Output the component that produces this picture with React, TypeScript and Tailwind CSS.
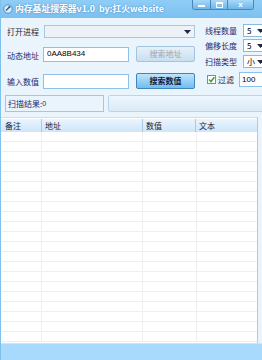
import React from "react";

const F = { fontFamily: '"Noto Sans CJK SC", "Liberation Sans", sans-serif' } as React.CSSProperties;

function Arrow() {
  return (
    <svg width="7" height="4" viewBox="0 0 7 4" className="shrink-0">
      <path d="M0 0 H7 L3.5 4 Z" fill="#1e2a44" />
    </svg>
  );
}

function Select({ value }: { value: string }) {
  return (
    <div className="w-[28px] shrink-0 h-[13px] bg-white border border-[#8eb9dc] flex items-center pl-[3px] pr-[6px]">
      <span className="text-[8px] leading-none text-black flex-1">{value}</span>
      <Arrow />
    </div>
  );
}

export default function App() {
  const rows = Array.from({ length: 21 });
  return (
    <div className="w-[262px] h-[360px] overflow-hidden flex flex-col bg-[#eaf4fc] border-l border-[#7fc0ec]" style={F}>
      {/* title bar */}
      <div className="h-[18px] flex items-start bg-gradient-to-b from-[#8fcdf6] to-[#7cc0f0] shrink-0">
        <div className="h-[18px] flex items-center pl-[2px]">
          <svg width="10" height="10" viewBox="0 0 10 10" className="mr-[2px]">
            <circle cx="5" cy="5" r="4.2" fill="#d9eefc" stroke="#3d7fb6" strokeWidth="0.8" />
            <path d="M3 6.5 L6.5 3" stroke="#2b5f9a" strokeWidth="1.4" />
            <circle cx="6.5" cy="3" r="1.1" fill="#2b5f9a" />
          </svg>
          <span className="text-[8.8px] font-bold text-white leading-none whitespace-pre [text-shadow:0_0_2px_#3a86c4]">
            内存基址搜索器v1.0  by:扛火website
          </span>
        </div>
        <div className="ml-auto mr-[8px] flex h-[10px] border border-[#4a87b8] border-t-0 rounded-b-[3px] overflow-hidden">
          <div className="w-[18px] h-full bg-gradient-to-b from-[#a8d8f7] to-[#6db7ea] flex items-center justify-center border-r border-[#4a87b8]">
            <div className="w-[7px] h-[2px] bg-white mt-[3px]" />
          </div>
          <div className="w-[17px] h-full bg-gradient-to-b from-[#a8d8f7] to-[#6db7ea] flex items-center justify-center border-r border-[#4a87b8]">
            <div className="w-[7px] h-[6px] border border-white border-t-2" />
          </div>
          <div className="w-[25px] h-full bg-gradient-to-b from-[#a8d8f7] to-[#6db7ea] flex items-center justify-center">
            <span className="text-[8px] font-bold text-white leading-none" style={{ fontFamily: '"Liberation Sans", sans-serif' }}>x</span>
          </div>
        </div>
      </div>

      {/* form */}
      <div className="flex shrink-0">
        <div className="w-[202px] shrink-0 flex flex-col">
          <div className="flex items-center mt-[7px] h-[13px]">
            <span className="w-[43px] pl-[6px] text-[8px] leading-none text-[#1b1f3a]">打开进程</span>
            <div className="w-[151px] h-[13px] bg-[#eef2f6] border border-[#a9c6df] flex items-center justify-end pr-[3px]">
              <Arrow />
            </div>
          </div>
          <div className="flex items-center mt-[8px] h-[16px]">
            <span className="w-[42px] pl-[6px] text-[8px] leading-none text-[#1f2a6a] pt-[4px]">动态地址</span>
            <div className="w-[86px] h-[15px] bg-white border border-[#8fc0e8] flex items-center pl-[3px]">
              <span className="text-[8px] leading-none text-black" style={{ fontFamily: '"Liberation Sans", sans-serif' }}>0AA8B434</span>
            </div>
            <div className="ml-[7px] w-[59px] h-[16px] rounded-[2px] border border-[#a6c3dc] bg-gradient-to-b from-[#e6f1fa] to-[#c9dff1] flex items-center justify-center">
              <span className="text-[8px] leading-none text-[#9aa6b2]">搜索地址</span>
            </div>
          </div>
          <div className="flex items-center mt-[11px] h-[16px]">
            <span className="w-[42px] pl-[6px] text-[8px] leading-none text-[#1f2a6a] pt-[2px]">输入数值</span>
            <div className="w-[86px] h-[15px] bg-white border border-[#8fc0e8]" />
            <div className="ml-[7px] w-[59px] h-[16px] rounded-[2px] border border-[#3f86bf] bg-gradient-to-b from-[#bfe3fb] to-[#6fbdf0] flex items-center justify-center">
              <span className="text-[8px] leading-none font-bold text-[#0f1b3d]">搜索数值</span>
            </div>
          </div>
        </div>
        <div className="flex-1 flex flex-col pl-[2px]">
          <div className="flex items-center mt-[6px] h-[13px]">
            <span className="w-[38px] shrink-0 text-[8px] leading-none text-[#1f2a6a]">线程数量</span>
            <Select value="5" />
          </div>
          <div className="flex items-center mt-[2px] h-[13px]">
            <span className="w-[38px] shrink-0 text-[8px] leading-none text-[#1f2a6a]">偏移长度</span>
            <Select value="5" />
          </div>
          <div className="flex items-center mt-[3px] h-[13px]">
            <span className="w-[38px] shrink-0 text-[8px] leading-none text-[#1f2a6a]">扫描类型</span>
            <Select value="小" />
          </div>
          <div className="flex items-center mt-[4px] h-[15px]">
            <div className="ml-[2px] w-[9px] h-[9px] shrink-0 bg-white border border-[#6f8fae] flex items-center justify-center">
              <svg width="7" height="7" viewBox="0 0 7 7">
                <path d="M1 3.5 L3 5.5 L6.3 1.2" stroke="#2fa52f" strokeWidth="1.5" fill="none" />
              </svg>
            </div>
            <span className="ml-[2px] w-[21px] shrink-0 text-[8px] leading-none text-[#1b1f3a]">过滤</span>
            <div className="w-[40px] shrink-0 h-[15px] bg-white border border-[#8fc0e8] flex items-center pl-[2px]">
              <span className="text-[8px] leading-none text-black" style={{ fontFamily: '"Liberation Sans", sans-serif' }}>100</span>
            </div>
          </div>
        </div>
      </div>

      {/* result row */}
      <div className="flex mt-[6px] h-[17px] shrink-0">
        <div className="ml-[4px] w-[99px] h-[17px] border border-[#9cc8ea] bg-[#eaf4fc] flex items-center pl-[2px]">
          <span className="text-[8px] leading-none text-[#1f2a6a]">扫描结果:</span>
          <span className="text-[7px] leading-none text-[#1f2a6a]" style={{ fontFamily: '"Liberation Sans", sans-serif' }}>0</span>
        </div>
        <div className="ml-[4px] flex-1 h-[17px] border border-[#b8d7ee] rounded-[2px] bg-gradient-to-b from-[#eef6fc] to-[#dbeaf7] -mr-[6px]" />
      </div>

      {/* table */}
      <div className="mt-[5px] w-[257px] h-[226px] bg-white border-t border-r border-[#c4e1f6] border-r-[#9fd0f4] flex flex-col shrink-0 overflow-hidden">
        <div className="h-[13px] mt-[1px] flex bg-gradient-to-b from-[#eaf5fe] to-[#cde6fa] shrink-0 text-[8px] leading-none text-[#1b1f3a] items-center">
          <div className="w-[41px] pl-[4px] h-full flex items-center border-r border-[#a9c9e4]">备注</div>
          <div className="w-[101px] pl-[3px] h-full flex items-center border-r border-[#a9c9e4]">地址</div>
          <div className="w-[53px] pl-[3px] h-full flex items-center border-r border-[#a9c9e4]">数值</div>
          <div className="flex-1 pl-[3px] h-full flex items-center">文本</div>
        </div>
        <div className="flex flex-col ml-[1px]">
          {rows.map((_, i) => (
            <div key={i} className="h-[10px] flex border-b border-[#efefef] shrink-0">
              <div className="w-[40px] border-r border-[#efefef]" />
              <div className="w-[101px] border-r border-[#efefef]" />
              <div className="w-[54px] border-r border-[#efefef]" />
              <div className="flex-1" />
            </div>
          ))}
        </div>
      </div>

      {/* status bar */}
      <div className="flex-1 bg-[#a8dafd] border-t border-[#c9e6fb]" />
    </div>
  );
}
